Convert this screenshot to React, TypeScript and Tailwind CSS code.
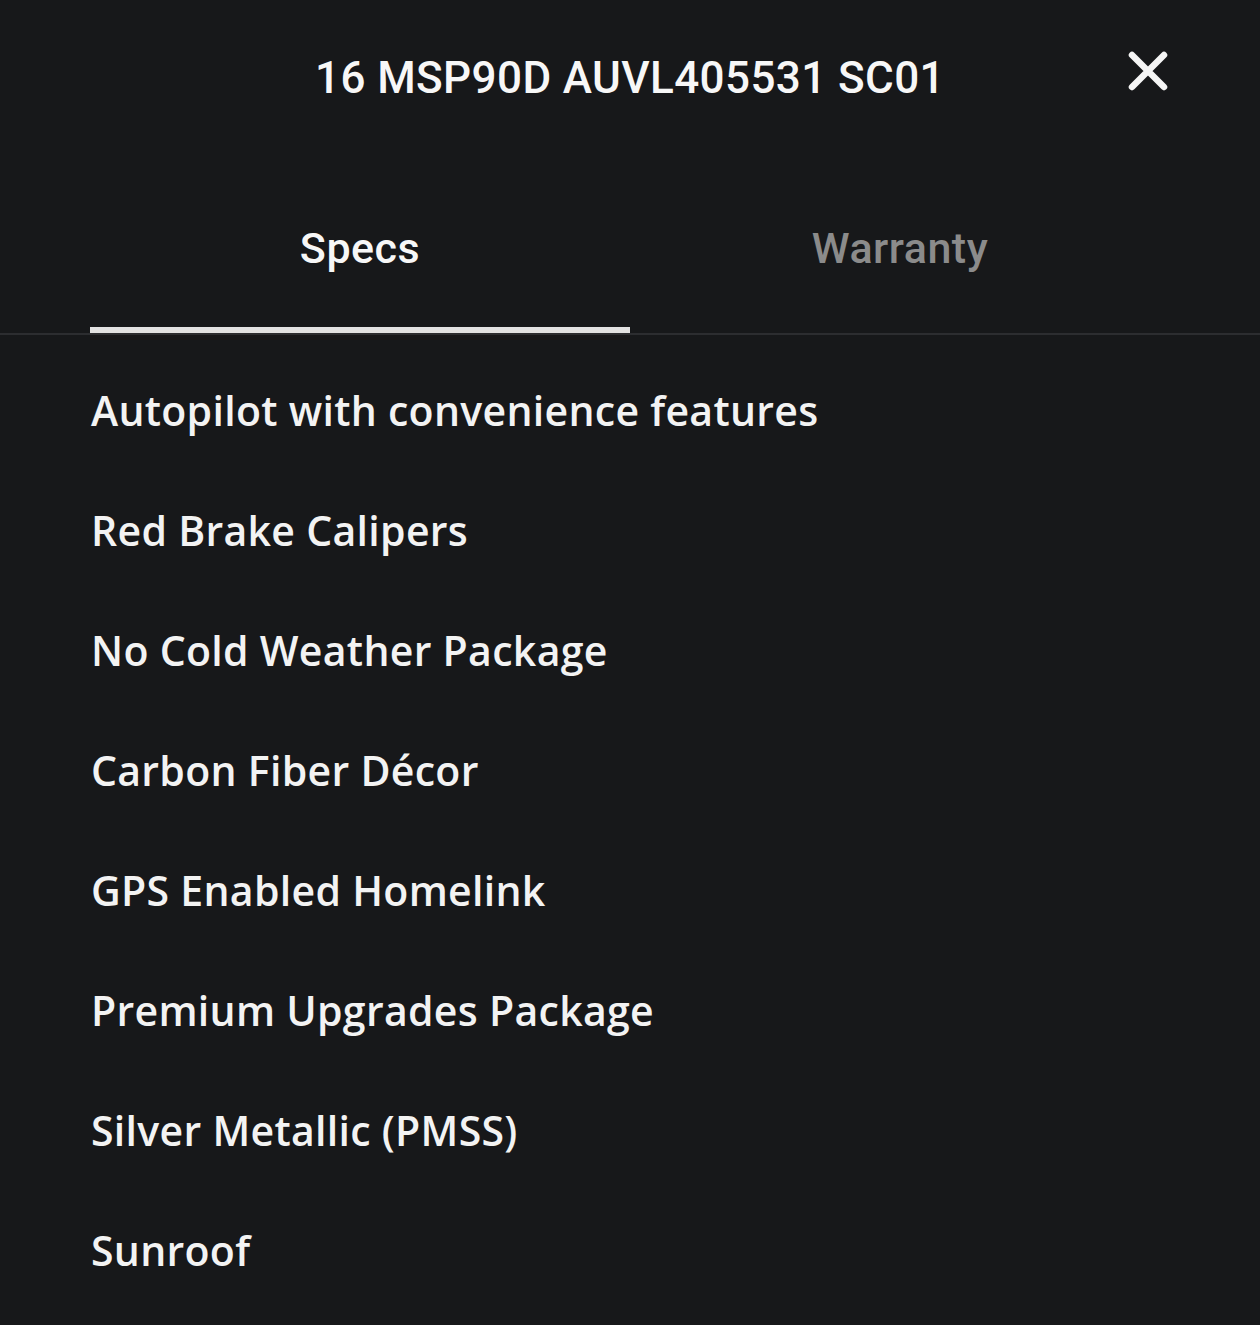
const specs = [
  "Autopilot with convenience features",
  "Red Brake Calipers",
  "No Cold Weather Package",
  "Carbon Fiber Décor",
  "GPS Enabled Homelink",
  "Premium Upgrades Package",
  "Silver Metallic (PMSS)",
  "Sunroof",
];

const CloseIcon = () => (
  <svg viewBox="0 0 40 40" className="h-10 w-10" fill="none">
    <path
      d="M4 4L36 36M36 4L4 36"
      stroke="#f5f5f5"
      strokeWidth="6.5"
      strokeLinecap="round"
    />
  </svg>
);

export default function App() {
  return (
    <div className="relative h-[1325px] w-[1260px] overflow-hidden bg-[#17181a] text-[#f3f3f3]">
      <header className="flex h-[156px] items-center justify-center">
        <h1 className="font-['Roboto',Arial,sans-serif] text-[44px] font-medium leading-[48px] tracking-[0.4px] text-[#f7f7f7]">
          16 MSP90D AUVL405531 SC01
        </h1>
        <button className="absolute right-[92px] top-[51px]" aria-label="Close">
          <CloseIcon />
        </button>
      </header>

      <div className="border-b-2 border-[#2c2d30]">
        <div className="mx-[90px] grid grid-cols-2 font-['Roboto',Arial,sans-serif] text-[43px] font-medium leading-[48px] tracking-[0.5px]">
          <button className="flex flex-col items-center">
            <span className="pt-[68px] pb-[55px] text-[#f7f7f7]">Specs</span>
            <span className="h-[6px] w-full bg-[#e2e2e2]" />
          </button>
          <button className="flex flex-col items-center">
            <span className="pt-[68px] pb-[55px] text-[#8b8b8b]">Warranty</span>
            <span className="h-[6px] w-full" />
          </button>
        </div>
      </div>

      <ul className="px-[91px] pt-[16px] font-['Open_Sans','Noto_Sans',sans-serif] text-[41px] font-semibold tracking-[0.3px]">
        {specs.map((s) => (
          <li key={s} className="flex h-[120px] items-center">
            {s}
          </li>
        ))}
      </ul>
    </div>
  );
}
